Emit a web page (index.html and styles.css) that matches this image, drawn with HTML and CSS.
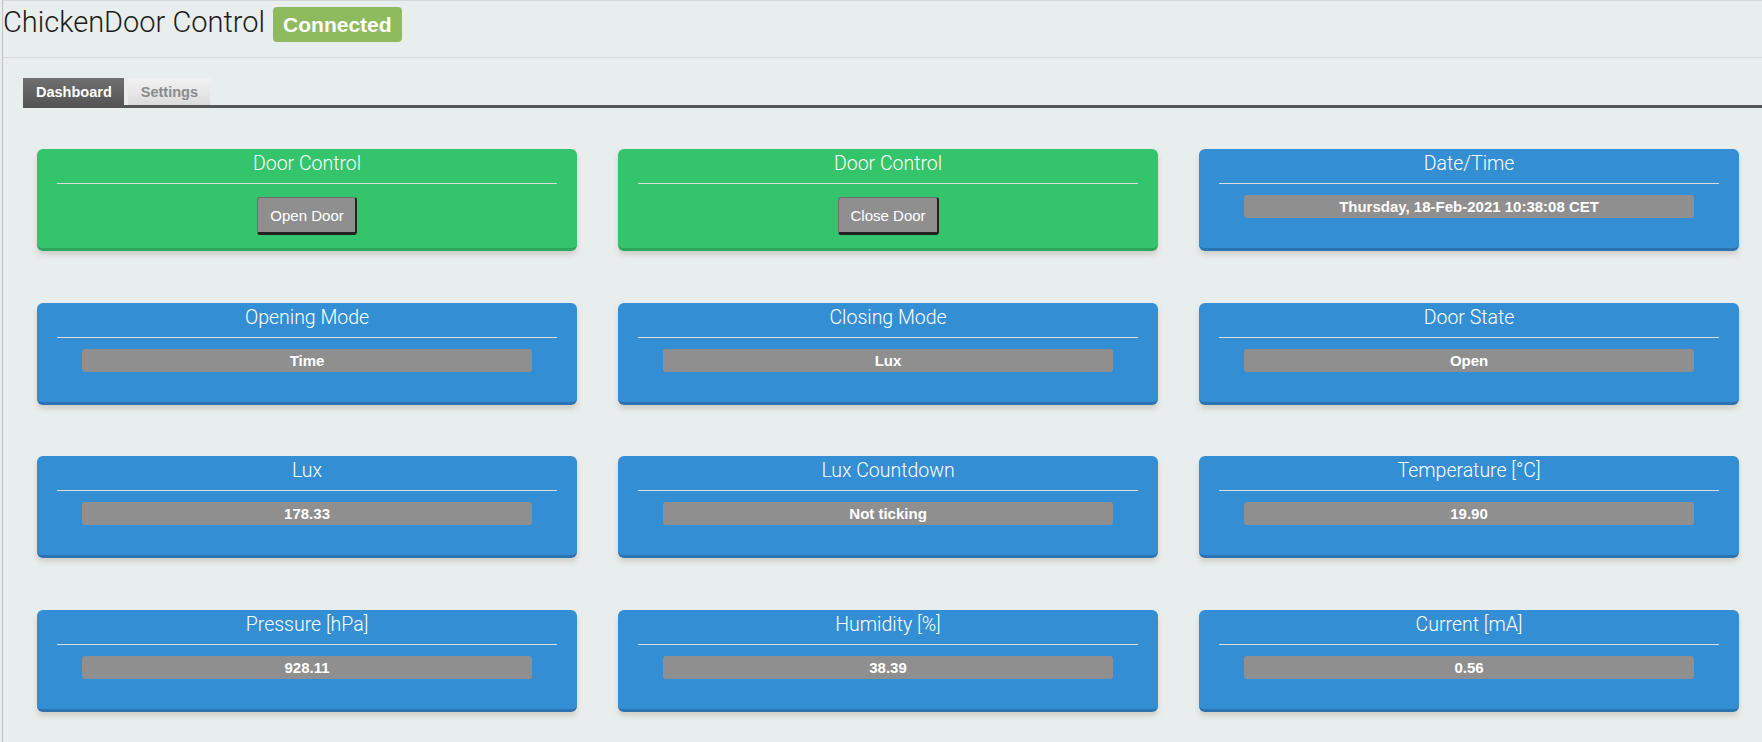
FILE: index.html
```html
<!DOCTYPE html>
<html lang="en">
<head>
<meta charset="utf-8">
<title>ChickenDoor Control</title>
<link rel="stylesheet" href="styles.css">
</head>
<body>
<div class="page">
  <header class="topnav">
    <span class="main-title">ChickenDoor Control</span>
    <span class="status">Connected</span>
  </header>
  <nav class="tabs">
    <span class="tab tab-active">Dashboard</span>
    <span class="tab">Settings</span>
  </nav>
  <main class="grid">
    <section class="card emerald">
      <h5 class="card-title">Door Control</h5>
      <hr class="card-rule">
      <button class="btn">Open Door</button>
    </section>
    <section class="card emerald">
      <h5 class="card-title">Door Control</h5>
      <hr class="card-rule">
      <button class="btn">Close Door</button>
    </section>
    <section class="card peterriver">
      <h5 class="card-title">Date/Time</h5>
      <hr class="card-rule">
      <div class="value">Thursday, 18-Feb-2021 10:38:08 CET</div>
    </section>

    <section class="card peterriver">
      <h5 class="card-title">Opening Mode</h5>
      <hr class="card-rule">
      <div class="value">Time</div>
    </section>
    <section class="card peterriver">
      <h5 class="card-title">Closing Mode</h5>
      <hr class="card-rule">
      <div class="value">Lux</div>
    </section>
    <section class="card peterriver">
      <h5 class="card-title">Door State</h5>
      <hr class="card-rule">
      <div class="value">Open</div>
    </section>

    <section class="card peterriver">
      <h5 class="card-title">Lux</h5>
      <hr class="card-rule">
      <div class="value">178.33</div>
    </section>
    <section class="card peterriver">
      <h5 class="card-title">Lux Countdown</h5>
      <hr class="card-rule">
      <div class="value">Not ticking</div>
    </section>
    <section class="card peterriver">
      <h5 class="card-title">Temperature [°C]</h5>
      <hr class="card-rule">
      <div class="value">19.90</div>
    </section>

    <section class="card peterriver">
      <h5 class="card-title">Pressure [hPa]</h5>
      <hr class="card-rule">
      <div class="value">928.11</div>
    </section>
    <section class="card peterriver">
      <h5 class="card-title">Humidity [%]</h5>
      <hr class="card-rule">
      <div class="value">38.39</div>
    </section>
    <section class="card peterriver">
      <h5 class="card-title">Current [mA]</h5>
      <hr class="card-rule">
      <div class="value">0.56</div>
    </section>
  </main>
</div>
</body>
</html>
```

FILE: styles.css
```css
html, body {
  margin: 0;
  padding: 0;
}

body {
  background: #e8eded;
  font-family: "Liberation Sans", Arial, sans-serif;
  color: #222;
  overflow: hidden;
}

.page {
  min-height: 742px;
  border-top: 1px solid #d4d7d7;
  border-left: 1px solid #bfc3c3;
  margin-left: 2px;
  box-sizing: border-box;
}

.topnav {
  height: 56px;
  border-bottom: 1px solid #d6d9d9;
  display: flex;
  align-items: flex-start;
  gap: 8px;
  padding-left: 0;
}

.main-title {
  font-family: Roboto, "Liberation Sans", sans-serif;
  font-weight: 300;
  font-size: 29px;
  line-height: 40px;
  margin-top: 1px;
  color: #1c1c1c;
}

.status {
  margin-top: 6px;
  height: 35px;
  line-height: 35px;
  padding: 0 10px;
  background: #8fbb5f;
  color: #fff;
  font-weight: 700;
  font-size: 21px;
  border-radius: 4px;
}

.tabs {
  margin: 20px 0 0 20px;
  display: flex;
  gap: 4px;
  border-bottom: 3px solid #555;
}

.tab {
  height: 27px;
  line-height: 28px;
  padding: 0 12px 0 13px;
  font-size: 14.5px;
  font-weight: 700;
  color: #8a8a8a;
  background: linear-gradient(#f2f2f2, #dcdcdc);
}

.tab-active {
  color: #fff;
  background: linear-gradient(#707070, #555);
}

.grid {
  display: grid;
  grid-template-columns: repeat(3, 539.5px);
  column-gap: 41.5px;
  row-gap: 51.67px;
  margin: 41px 0 0 34.3px;
}

.card {
  height: 102px;
  box-sizing: border-box;
  border-radius: 6px;
  padding: 0 20px;
  color: #fff;
  text-align: center;
  box-shadow: 0 4px 5px rgba(190, 185, 175, 0.55);
}

.emerald {
  background: #34c46b;
  border-bottom: 3px solid #2ca65b;
}

.peterriver {
  background: #338ed4;
  border-bottom: 3px solid #2b74b1;
}

.card-title {
  margin: 0;
  height: 34px;
  font-family: Roboto, "Liberation Sans", sans-serif;
  font-weight: 300;
  font-size: 19.5px;
  line-height: 30px;
}

.card-rule {
  margin: 0;
  border: 0;
  border-top: 1px solid #dcdcdc;
}

.btn {
  margin-top: 13px;
  height: 38px;
  padding: 0 11px 0 12px;
  background: #8f8f8f;
  color: #fff;
  font-family: "Liberation Sans", Arial, sans-serif;
  font-size: 15px;
  border-top: 1px solid #6e6e6e;
  border-left: 1px solid #6e6e6e;
  border-right: 2px solid #222;
  border-bottom: 3px solid #222;
  border-radius: 3px;
  box-sizing: border-box;
}

.value {
  margin: 11px 25px 0;
  height: 23px;
  line-height: 23px;
  background: #8f8f8f;
  border-radius: 3px;
  font-weight: 700;
  font-size: 15px;
  color: #fff;
}
```
